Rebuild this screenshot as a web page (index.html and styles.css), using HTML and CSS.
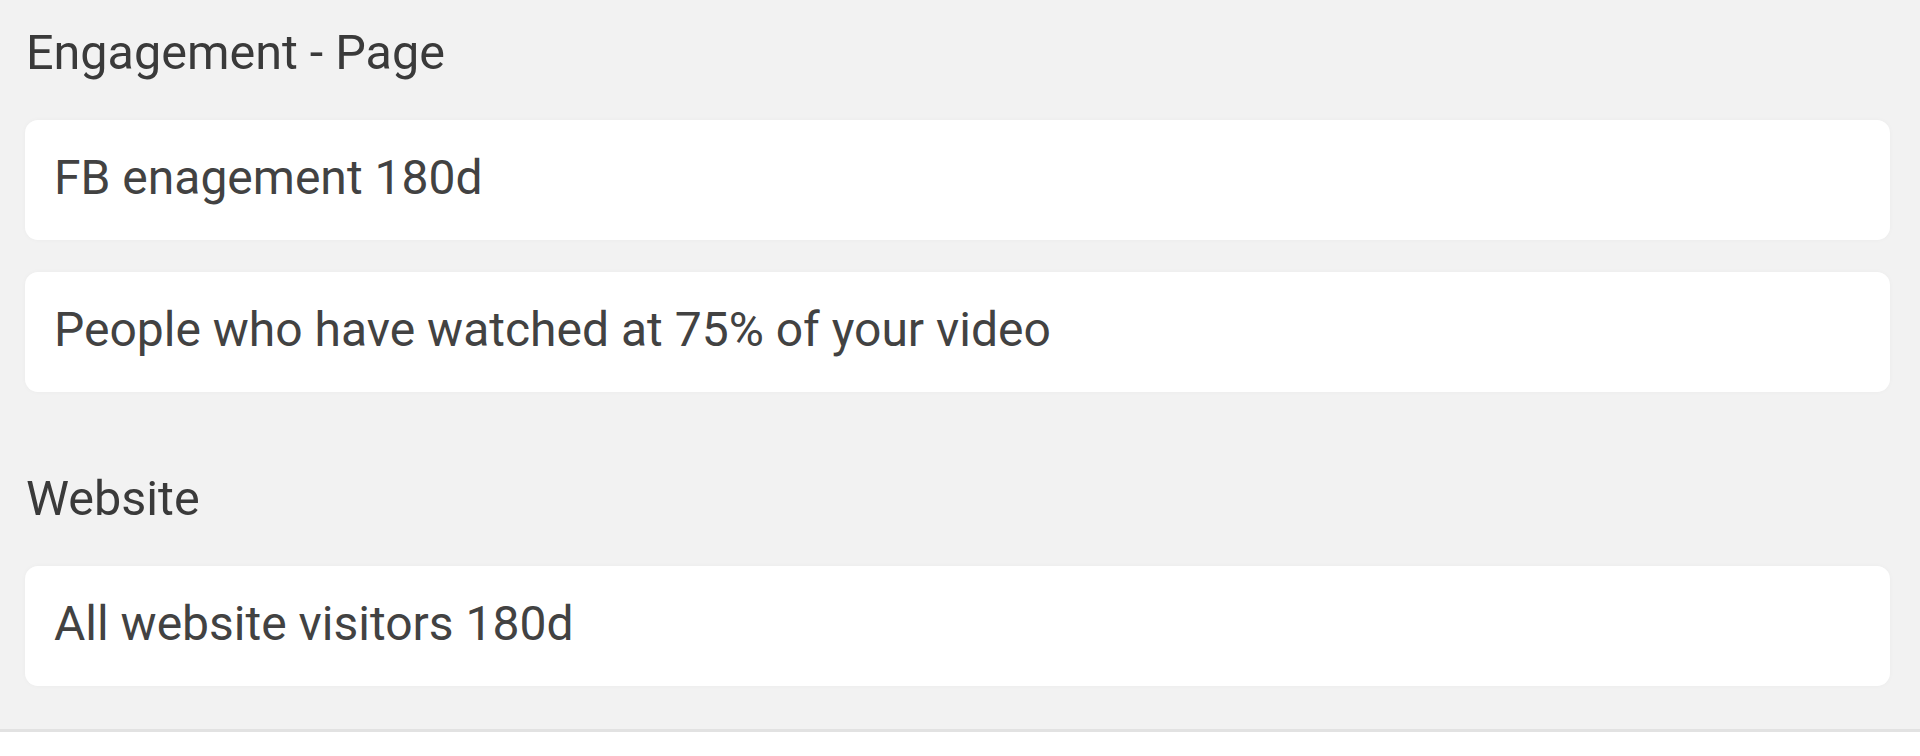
FILE: index.html
```html
<!DOCTYPE html>
<html lang="en">
<head>
<meta charset="UTF-8">
<meta name="viewport" content="width=device-width, initial-scale=1.0">
<title>Audiences</title>
<link rel="stylesheet" href="styles.css">
</head>
<body>
<div class="audience-panel">
    <div class="audience-group">
        <h3>Engagement - Page</h3>
        <div class="audience-item">FB enagement 180d</div>
        <div class="audience-item">People who have watched at 75% of your video</div>
    </div>
    <div class="audience-group">
        <h3>Website</h3>
        <div class="audience-item">All website visitors 180d</div>
    </div>
</div>
</body>
</html>
```

FILE: styles.css
```css
body {
    margin: 0;
    background-color: #fff;
    font-family: Roboto, "Liberation Sans", sans-serif;
}
.audience-panel {
    background-color: #f2f2f2;
    padding: 25px 30px 43px 25px;
    border-bottom: 3px solid #e2e2e2;
}
.audience-group + .audience-group {
    margin-top: 79px;
}
.audience-group h3 {
    margin: 0 0 39px 1px;
    font-size: 48.5px;
    font-weight: 400;
    line-height: 56px;
    color: #3a3a3a;
}
.audience-item {
    background-color: #fff;
    border-radius: 13px;
    box-shadow: 0 0 5px rgba(0, 0, 0, 0.03);
    padding: 30px 28px 34px 29px;
    font-size: 48px;
    line-height: 56px;
    color: #424242;
}
.audience-item + .audience-item {
    margin-top: 32px;
}
```
